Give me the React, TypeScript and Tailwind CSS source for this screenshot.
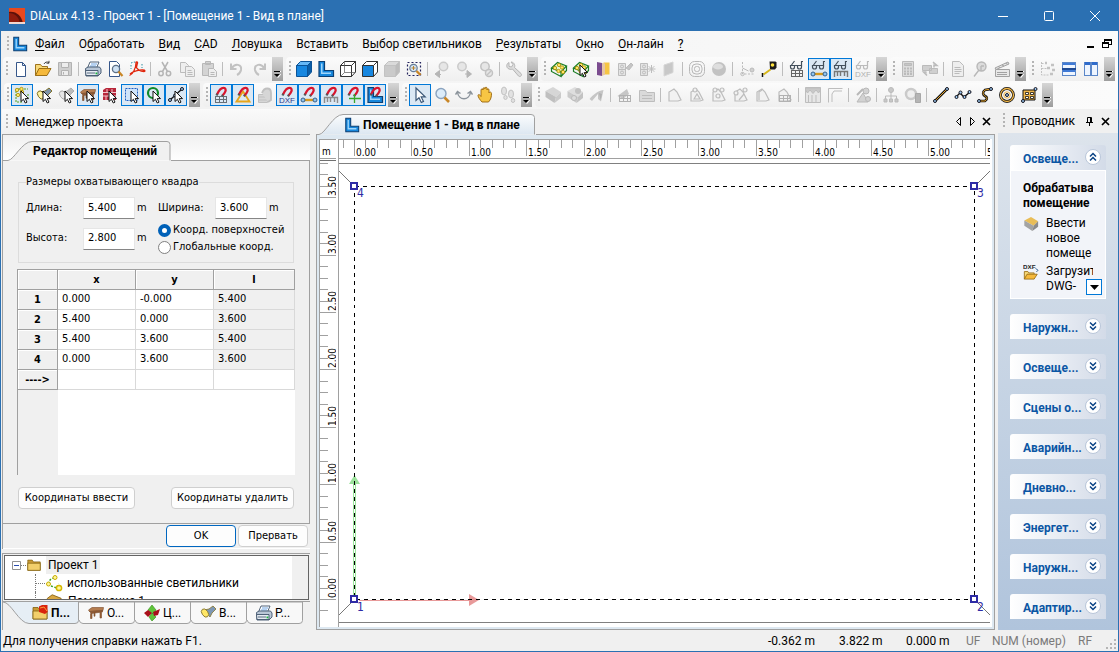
import type { ReactNode } from 'react'
import { clsx } from 'clsx'

const UI = "font-['Roboto','Noto_Sans',sans-serif]"
const TAHOMA = "font-['DejaVu_Sans_Condensed','DejaVu_Sans',sans-serif]"

/* ---------- Icon parts ---------- */

const pointer = (
  <path d="M8 5v10.5l2.4-2.2 1.9 3.7 1.7-.9-1.8-3.5h3.3z" fill="#fff" stroke="#111" strokeWidth="1" />
)

const magnet = (
  <g fill="none">
    <path d="M5 8.500C7 4 9.500 1 12.500 2C15 3.500 13 7 10.500 9.500" stroke="#d9152e" strokeWidth="2.200" />
    <path d="M4.500 9.500l.8-1.700M9.800 10.300l1.200-1.300" stroke="#555" strokeWidth="2.200" />
  </g>
)

const glasses = (color: string) => (
  <g fill="none" stroke={color} strokeWidth="1.2">
    <path d="M2.500 5.500h4v1.500q0 2-2 2t-2-2zM9.500 5.500h4v1.500q0 2-2 2t-2-2z" />
    <path d="M6.500 5.500h3M3.500 5l3-4M13.500 5.500V1.500h1.500" />
  </g>
)

const magnifier = (color: string, fill: string, handle: string) => (
  <g>
    <circle cx="8" cy="7.500" r="5" fill={fill} stroke={color} strokeWidth="1.400" />
    <path d="M11.500 11.500l4.500 4.500" stroke={handle} strokeWidth="2.600" />
  </g>
)

const gridPart = (color: string, y = 10) => (
  <g stroke={color} fill="none" strokeWidth="1" shapeRendering="crispEdges">
    <path d={`M3.500 ${y}.5h11M3.500 ${y + 3}.5h11M3.500 ${y + 6}.5h11M3.500 ${y}v7M7.500 ${y}v7M11.500 ${y}v7M14.500 ${y}v7`} />
  </g>
)

const dumbbell = (
  <g stroke="#35618e" strokeWidth="1">
    <path d="M4 14h10" stroke="#d99a1c" strokeWidth="2.400" />
    <circle cx="3" cy="14" r="2" fill="#8fc3ee" />
    <circle cx="15" cy="14" r="2" fill="#8fc3ee" />
  </g>
)

const rulerPart = (color: string) => (
  <path d="M2.500 17v-5.500h13v5.500M5.500 12v4M8.500 12v4M12.500 12v4" fill="none" stroke={color} strokeWidth="1.400" />
)

const polygon = (extra?: ReactNode) => (
  <g fill="#f2f2f2" stroke="#bdbdbd" strokeWidth="1.2">
    <path d="M3 15V6l5-3 3 3 4 8-3 1z" />
    {extra}
  </g>
)

const smallText = (text: string, color: string) => (
  <text x="9" y="17" textAnchor="middle" fontSize="8" fontFamily="Liberation Sans, sans-serif" fill={color}>
    {text}
  </text>
)

const blueL = (
  <g>
    <path d="M2 1.500h5.500v9h9v6H2z" fill="#1787dc" stroke="#0b3f73" strokeWidth="1.2" />
    <path d="M4 3.500h1.500v9H14v1.500H4z" fill="#9fd6fb" />
  </g>
)

const bulb = (x: number, y: number) => (
  <circle cx={x} cy={y} r="1.700" fill="#ffe566" stroke="#a68a00" strokeWidth=".8" />
)

const node = (x: number, y: number) => (
  <circle cx={x} cy={y} r="1.500" fill="#9cc9f3" stroke="#15151f" strokeWidth="1" />
)

const cube = (top: string, front: string, side: string, line = 'none') => (
  <g stroke={line} strokeWidth="1" strokeLinejoin="round">
    <path d="M1.500 5.500l4-4h11l-4 4z" fill={top} />
    <path d="M1.500 5.500h11v11h-11z" fill={front} />
    <path d="M12.500 5.500l4-4v10.500l-4 4.500z" fill={side} />
  </g>
)

const printer = (
  <g stroke="#40536b" strokeWidth=".9">
    <path d="M6 2h9l-2.500 6H3.500z" fill="#fff" />
    <path d="M7 4h6M6 6h6" stroke="#5f9be0" />
    <path d="M1.500 8.500L4 7h11.500l1.500 2v4l-3 3h-12z" fill="#b9c6d6" />
    <path d="M1.500 10.500h12.500v5h-12z" fill="#e6ecf3" />
    <path d="M3 13h8" stroke="#4b5d74" />
    <path d="M11.500 12.500h1.800v1.800h-1.800z" fill="#18b43c" stroke="none" />
  </g>
)

const tableIcon = (
  <g stroke="#7b4a28" strokeWidth=".6">
    <path d="M1.500 6l3.500-2.500h11.500L16 6.500l-13.500 1z" fill="#b57d50" />
    <path d="M2.500 7.500l13-1v1.500L4.500 9.500z" fill="#8f5a34" />
    <path d="M3.500 9.500h1.500v5H3.500zM7 9.200h1v3H7zM13 8.500h1.500v5.500H13z" fill="#9a6238" />
  </g>
)

const footlight = (a: string, b: string, c: string) => (
  <g stroke={c} strokeWidth=".9">
    <path d="M5 6l5-1 4-3 3 3-4 4-2 4z" fill={b} />
    <ellipse cx="6" cy="9" rx="3" ry="4.500" transform="rotate(-35 6 9)" fill={a} />
  </g>
)

const folder = (
  <g stroke="#80600f" strokeWidth=".8">
    <path d="M2 5V3.500h5l1.500 2H16V15H2z" fill="#c99a35" />
    <path d="M2 15V7h14v8z" fill="#f2cf6b" />
  </g>
)

const brick = (a: string, b: string, c: string) => (
  <g>
    <path d="M1.500 5L9 1l8 5-5 5z" fill={a} />
    <path d="M1.500 5v6l9 6 1.500-6z" fill={b} />
    <path d="M12 11l5-5v6l-6.500 5z" fill={c} />
  </g>
)

const lamps = (
  <g>
    <path d="M1.500 8l6-5.500L16.500 6l-5.500 6z" fill="#e9fbd2" stroke="#1c7d25" strokeWidth="1.200" />
    <path d="M1.500 8v3.500l9.500 5V12M11 16.500l5.500-6V6" fill="none" stroke="#1c7d25" strokeWidth="1.200" />
    {bulb(5, 8)}
    {bulb(9, 5)}
    {bulb(12, 7.5)}
    {bulb(8.5, 11)}
    {bulb(13, 12)}
  </g>
)

const icons: Record<string, ReactNode> = {
  new: <path d="M4.500 2.500h6l3 3v11h-9zM10.500 2.500v3h3" fill="#fff" stroke="#37578a" />,
  open: (
    <g stroke="#93650b" strokeWidth=".9">
      <path d="M1.500 15.500V4.500h5l1.500 2h5.500v2" fill="#f7d979" />
      <path d="M1.500 15.500l3.500-7h12l-4 7z" fill="#f5b93c" />
      <path d="M10 4c1-2 3-2.500 5-1.500M15 .8v2.400h-2.500" stroke="#333" fill="none" />
    </g>
  ),
  save: (
    <g fill="#cfcfcf" stroke="#b2b2b2">
      <path d="M2.500 2.500h13v13h-13z" />
      <path d="M5.500 2.500h7v5h-7zM5.500 10.500h7v5h-7z" fill="#ededed" />
      <path d="M7.500 12v2.500" />
    </g>
  ),
  print: printer,
  preview: (
    <g>
      <path d="M3.500 1.500h7l3 3v12h-10z" fill="#fff" stroke="#37578a" />
      <circle cx="10" cy="9" r="3.600" fill="#cfe2f4" stroke="#5c6f86" strokeWidth="1.300" />
      <path d="M12.500 11.500l4 4.500" stroke="#c98626" strokeWidth="2.200" />
    </g>
  ),
  pdf: (
    <g fill="none">
      <path d="M3 3l3-1 5 1M14 4v4M3 5v4" stroke="#2e8fa0" strokeDasharray="1.500 1.500" />
      <path d="M1.500 15.500c3-1 6.500-7 6.500-12.500q0-1.500 1-1c1 0 0 3-.5 5M7.500 6c1.500 3 5 5.500 8.500 5.500 1.500 0 1-1.500-.5-1.500-4-.5-11 1.500-13.500 4" stroke="#e0260d" strokeWidth="1.300" />
    </g>
  ),
  cut: (
    <g fill="none" stroke="#b5b5b5" strokeWidth="1.500">
      <path d="M6 2l5.500 9.500M12 2L6.500 11.500" />
      <circle cx="5" cy="13.500" r="2.200" />
      <circle cx="12.500" cy="13.500" r="2.200" />
    </g>
  ),
  copy: (
    <g fill="#eee" stroke="#bbb">
      <path d="M2.500 2.500h5l3 3v7h-8z" />
      <path d="M7.500 6.500h6l3 3v7h-9zM9.500 10.500h4M9.500 12.500h5M9.500 14.500h5" />
    </g>
  ),
  paste: (
    <g fill="#d4d4d4" stroke="#b8b8b8">
      <path d="M2.500 3.500h11v12h-11zM5.500 1.500h5v3h-5z" />
      <path d="M8.500 8.500h5l3 3v5h-8zM10.500 12.500h4M10.500 14.500h4" fill="#eee" />
    </g>
  ),
  undo: (
    <g fill="none" stroke="#c2c2c2" strokeWidth="2">
      <path d="M4 8c3-5 10-4 9 2-.5 2.500-2 4-4 5" />
      <path d="M3 3.500v5.500h5.500" />
    </g>
  ),
  redo: (
    <g fill="none" stroke="#c2c2c2" strokeWidth="2">
      <path d="M14 8c-3-5-10-4-9 2 .5 2.500 2 4 4 5" />
      <path d="M15 3.500v5.500H9.500" />
    </g>
  ),
  cube: cube('#65b8f7', '#1787e0', '#0a5ea8', '#0b5397'),
  blueL,
  wire: (
    <g>
      {cube('#fff', '#fff', '#fff', '#333')}
      <path d="M5.500 1.500v11h11M5.500 12.500l-4 4" fill="none" stroke="#555" strokeWidth=".7" />
    </g>
  ),
  wireBlue: cube('#fff', '#1787e0', '#fff', '#333'),
  cubeGrey: cube('#dadada', '#cacaca', '#bcbcbc', '#c2c2c2'),
  zoomArea: (
    <g>
      <path d="M2.500 2.500h13v13h-13z" fill="none" stroke="#23235c" strokeWidth="1.200" strokeDasharray="2 2" />
      <circle cx="8.500" cy="8" r="3.700" fill="#d5e6f6" stroke="#677d96" strokeWidth="1.200" />
      <path d="M6.500 8h4M8.500 6v4" stroke="#b9822c" />
      <path d="M11.500 11l4 4" stroke="#c98626" strokeWidth="2.400" />
    </g>
  ),
  zoomPrev: (
    <g>
      <circle cx="10.500" cy="6.500" r="4.200" fill="#e6e6e6" stroke="#cacaca" strokeWidth="1.500" />
      <path d="M8 14.500H4M6.500 10.500l-4.500 3.500 4.500 3.500z" fill="#b5b5b5" stroke="#b5b5b5" />
    </g>
  ),
  zoomNext: (
    <g>
      <circle cx="7" cy="6.500" r="4.200" fill="#e6e6e6" stroke="#cacaca" strokeWidth="1.500" />
      <path d="M10 14h3M12 10.500l4.500 3.500-4.500 3.500z" fill="#b5b5b5" stroke="#b5b5b5" />
    </g>
  ),
  zoomOff: (
    <g fill="#e6e6e6" stroke="#c2c2c2" strokeWidth="1.500">
      <circle cx="8" cy="6.500" r="4.200" />
      <circle cx="12" cy="13" r="3.500" />
      <path d="M10 15l4-4" />
    </g>
  ),
  wrench: (
    <path d="M4 2.500c-2.500 1-3.500 5 0 6.500 1.500.5 2.500.5 3.500 0l6 7c1.500 1.500 4-.5 2.500-2.500L9.500 7.500c1-3-1-5.500-3.500-5.500L8 4.500 6.500 7 4 6.500z" fill="#ddd" stroke="#b5b5b5" />
  ),
  lamps,
  lampsPick: <g>{lamps}{pointer}</g>,
  filter: (
    <g>
      <path d="M3 2l5 1v13l-5-1z" fill="#7b4c8f" />
      <path d="M9.500 2.500h6v12h-6z" fill="#f6c544" />
      <path d="M8 3l3 .5v11L8 16z" fill="#e7c6a4" />
    </g>
  ),
  colorOff: (
    <g fill="#e4e4e4" stroke="#bdbdbd">
      <path d="M2.500 3.500h7v12h-7zM2.500 9.500h7" />
      <circle cx="6" cy="6.500" r="1.500" />
      <circle cx="6" cy="12.500" r="1.500" />
      <path d="M10 8l5-5 2 2-4 5z" fill="#c5c5c5" />
    </g>
  ),
  sunOff: (
    <g fill="#e4e4e4" stroke="#bdbdbd">
      <path d="M2.500 3.500h7v12h-7zM2.500 9.500h7" />
      <circle cx="6" cy="6.500" r="1.500" />
      <circle cx="6" cy="12.500" r="1.500" />
      <path d="M13.500 5v8M9.500 9h8M10.700 6.200l5.600 5.600M16.300 6.200l-5.600 5.600" />
    </g>
  ),
  sheet: <path d="M4 5l9-3v10.500L4 16z" fill="#c8c8c8" stroke="#d6d6d6" />,
  rings: (
    <g fill="none" stroke="#b8b8b8">
      <rect x="1.500" y="1.500" width="15" height="15" rx="5" />
      <rect x="4" y="4" width="10" height="10" rx="4" />
      <rect x="6.500" y="6.500" width="5" height="5" rx="2" />
    </g>
  ),
  sphere: (
    <g>
      <circle cx="9" cy="9" r="7" fill="#c2c2c2" />
      <ellipse cx="8" cy="6.500" rx="5" ry="3" fill="#dedede" />
    </g>
  ),
  axes: (
    <g stroke="#bbb" fill="none">
      <path d="M4.500 2v12h11" strokeDasharray="2 1.500" />
      <circle cx="4.500" cy="14" r="1.700" />
      <circle cx="14" cy="10" r="2" fill="#d0d0d0" />
      <path d="M4.500 8l6 3" />
    </g>
  ),
  tape: (
    <g>
      <path d="M9.500 1.500h6l1 1v5l-1.500 2h-5z" fill="#1b1b1b" />
      <circle cx="12.500" cy="5" r="1.800" fill="#ffe23e" />
      <path d="M10.500 9.500l-7 5" stroke="#d8b81c" strokeWidth="2" />
      <path d="M2.500 13v4" stroke="#111" strokeWidth="1.500" />
    </g>
  ),
  glassGrid: <g>{glasses('#44505c')}{gridPart('#666')}</g>,
  glassBar: <g>{glasses('#44505c')}{dumbbell}</g>,
  glassRuler: <g>{glasses('#44505c')}{rulerPart('#777')}</g>,
  glassDxf: <g>{glasses('#bbb')}{smallText('DXF', '#b0b0b0')}</g>,
  calc: (
    <g fill="#ddd" stroke="#bbb">
      <path d="M3.500 1.500h11v15h-11z" />
      <path d="M5.500 3.500h7v2h-7z" fill="#c6c6c6" />
      <path d="M5 8.500h8M5 11.500h8M5 14h8" strokeDasharray="2 1" strokeWidth="1.800" />
    </g>
  ),
  swap: (
    <g fill="#cfcfcf" stroke="#bbb">
      <path d="M1.500 5.500h9v5h-9zM8.500 8.500h8v5h-8z" />
      <path d="M12 2l4 3.500h-3v2M6 15.500L2.500 12h3" strokeWidth="1.500" />
    </g>
  ),
  doc: <path d="M3.500 1.500h7l4 4v11h-11zM5.500 7.500h6M5.500 9.500h7M5.500 11.500h7M5.500 13.500h5" fill="#eee" stroke="#bbb" />,
  pin: (
    <g fill="#dcdcdc" stroke="#b8b8b8" strokeWidth="1.400">
      <circle cx="10.500" cy="6.500" r="4.500" />
      <path d="M8 10l-5 6.500M10 6h3M10 6v5" />
    </g>
  ),
  clapper: (
    <g stroke="#a2a2a2" fill="#e8e8e8">
      <path d="M2.500 9.500h14v7h-14zM4 12.500h10M4 14.500h10" />
      <path d="M2 8l13-6 1 2L3 9.500zM5 6.500l2 1M9 5l2 1M12.500 3.500l2 .5" />
    </g>
  ),
  tree: (
    <g stroke="#c2c2c2" fill="#d5d5d5">
      <path d="M3.500 2v13h7M3.500 8.500h5M3.500 3.500h3" fill="none" strokeDasharray="2 1" />
      <path d="M7 3h2M9 8h3M13 5h3M12 14h3M14 10h3" strokeWidth="2.500" />
    </g>
  ),
  splitH: (
    <g shapeRendering="crispEdges">
      <path d="M2.500 2.500h13v13h-13z" fill="#eef5ff" stroke="#5a86c8" />
      <path d="M3 3h12v2H3zM3 10h12v2H3z" fill="#3f7ad6" />
      <path d="M2 8.500h14" stroke="#1f4a94" strokeWidth="2" />
    </g>
  ),
  splitV: (
    <g shapeRendering="crispEdges">
      <path d="M2.500 2.500h13v13h-13z" fill="#eef5ff" stroke="#5a86c8" />
      <path d="M3 2h12v3H3z" fill="#2f6bcb" />
      <path d="M9 2v14" stroke="#5a86c8" strokeWidth="2" />
    </g>
  ),
  selLamps: (
    <g>
      <path d="M3 5v11h7M5 3h10M15 8v4" fill="none" stroke="#56a21c" strokeDasharray="2 1" />
      {bulb(4, 4)}
      {bulb(8.5, 3)}
      {bulb(5, 9)}
      {bulb(9, 6)}
      {pointer}
    </g>
  ),
  selSpot: <g>{footlight('#fff3a0', '#7e93a8', '#7a6a1d')}{pointer}</g>,
  selSpotGrey: <g>{footlight('#e6e6e6', '#bbb', '#a8a8a8')}{pointer}</g>,
  selTable: <g>{tableIcon}{pointer}</g>,
  selBrick: (
    <g>
      <path d="M2 4l3-2h10v12H2z" fill="#b7273a" />
      <path d="M2 6.500h13M2 10h13M6 3v3M11 3v3M8 7v3M5 10v4" stroke="#f2c4ca" />
      {pointer}
    </g>
  ),
  selArea: (
    <g>
      <path d="M2.500 2.500h12v12h-12z" fill="#cfe4fa" stroke="#1f61c4" strokeDasharray="2 1" />
      {pointer}
    </g>
  ),
  selRing: (
    <g>
      <circle cx="8" cy="7" r="5" fill="none" stroke="#0f8a2a" strokeWidth="2.200" />
      {pointer}
    </g>
  ),
  selLine: (
    <g>
      <path d="M3 14L15 3" stroke="#111" strokeWidth="1.300" />
      {node(3, 14)}
      {node(8, 9.5)}
      {node(15, 3)}
      {pointer}
    </g>
  ),
  magGrid: <g>{gridPart('#687078')}{magnet}</g>,
  magAngle: (
    <g>
      <path d="M2.500 15.500L9 5.500l6.500 10z" fill="none" stroke="#e7a51a" strokeWidth="1.800" />
      {magnet}
    </g>
  ),
  magOff: (
    <g fill="#d6d6d6" stroke="#c0c0c0">
      <path d="M2.500 8.500h9v8h-9zM2.500 11h9M2.500 14h9" />
      <path d="M6 7c2-6 9-6 9 0v7l-3 2" strokeWidth="1.800" />
    </g>
  ),
  magDxf: <g>{magnet}{smallText('DXF', '#2f3a8c')}</g>,
  magBar: <g>{magnet}{dumbbell}</g>,
  magRuler: <g>{rulerPart('#8c8c8c')}{magnet}</g>,
  magCross: <g>{magnet}<path d="M10.500 8v9M5 12.500h12" stroke="#36a82c" strokeWidth="1.300" /></g>,
  magL: <g>{blueL}{magnet}</g>,
  arrow: <path d="M5 2v12.500l3-2.700 2.300 4.700 2.200-1.100-2.300-4.500h4z" fill="#fff" stroke="#3c5878" strokeWidth="1.200" />,
  zoom: magnifier('#8aa3bf', '#dcecfa', '#c98626'),
  orbit: <path d="M2.500 6c1 9 12 9 13 0M.5 8.500l2-3 3 2M17.500 8.500l-2-3-3 2" fill="none" stroke="#8c949c" strokeWidth="1.500" />,
  hand: (
    <path d="M5 16c-2-2-4-5-4-6.500s2-1 3 1V4c0-1.500 2-1.500 2 0V2.800c0-1.500 2-1.500 2 0v-.5c0-1.500 2-1.500 2 0v1.500c0-1.300 2-1.300 2 0V7c0-1 2.500-1.500 2.500.5 0 3-.5 6-3 8.500z" fill="#f7c544" stroke="#96620b" strokeWidth=".9" />
  ),
  feet: (
    <g fill="#e2e2e2" stroke="#c2c2c2">
      <ellipse cx="5" cy="5" rx="2.500" ry="4" />
      <ellipse cx="6.500" cy="11.500" rx="1.700" ry="2" />
      <ellipse cx="12" cy="8" rx="2.500" ry="4" />
      <ellipse cx="14" cy="14.500" rx="1.700" ry="2" />
    </g>
  ),
  brickOff: brick('#d6d6d6', '#bfbfbf', '#cacaca'),
  objOff: (
    <g>
      {brick('#dedede', '#cacaca', '#c2c2c2')}
      <circle cx="12" cy="5" r="3" fill="#c2c2c2" />
      <circle cx="8" cy="12" r="2.500" fill="#ddd" stroke="#bbb" />
    </g>
  ),
  wedgeOff: (
    <g>
      <path d="M1.500 13C5 9 9 5 15.500 4L13 15.500 10 13V8l-6 7z" fill="#c6c6c6" />
      <path d="M11 7l3 1-1.500 6z" fill="#b2b2b2" />
    </g>
  ),
  gridOff: (
    <g>
      <path d="M1.500 10L11 3l2 5-6 5z" fill="#c6c6c6" />
      {gridPart('#b2b2b2', 9)}
    </g>
  ),
  folderOff: <path d="M1.500 4.500h6l1.500 2h7.500v9h-15zM4 9.500h10M4 12.500h10" fill="#dadada" stroke="#bdbdbd" />,
  poly1: polygon(),
  poly2: polygon(<><circle cx="7" cy="4" r="2" /><path d="M6 13l3-5 3 5z" /></>),
  poly3: polygon(<><circle cx="5" cy="4" r="2" /><circle cx="12" cy="4" r="2" /><circle cx="8" cy="10" r="2" /></>),
  poly4: polygon(<><circle cx="4" cy="7" r="2" /><circle cx="13" cy="4" r="2" /><path d="M7 14l5-6" /></>),
  poly5: polygon(<path d="M5 14V6l3-2" />),
  poly6: <g>{polygon()}{gridPart('#b2b2b2', 9)}</g>,
  curtain: (
    <g fill="#e6e6e6" stroke="#bdbdbd">
      <path d="M1.500 1.500h15v15h-15z" />
      <path d="M1.500 2h15v2l-2 3-2.500-3L9 7.500 6 4 3.500 7l-2-3z" fill="#c8c8c8" />
      <path d="M4.500 9v7M8 9v7M12 9v7" />
    </g>
  ),
  corner: <path d="M2.500 16.500v-14h14M6 16V8l2-3h8" fill="none" stroke="#bdbdbd" />,
  render: (
    <g fill="#d2d2d2" stroke="#b8b8b8">
      <path d="M3 16l6-9 5 9z" />
      <circle cx="12" cy="5" r="3" />
      <circle cx="14" cy="13" r="2.500" />
      <path d="M3 9l6-6" strokeWidth="2" />
    </g>
  ),
  org: (
    <g fill="#c8c8c8" stroke="#bbb">
      <circle cx="9" cy="4" r="2.500" />
      <path d="M9 6v4M3.500 13v-3h11v3M9 10v3" fill="none" />
      <path d="M2 13h3v3H2zM7.500 13h3v3h-3zM13 13h3v3h-3z" />
    </g>
  ),
  gearDoc: (
    <g stroke="#cacaca" fill="#efefef">
      <circle cx="7" cy="8" r="5" strokeWidth="2.500" />
      <path d="M11.500 7.500h5v9h-5z" fill="#b5b5b5" stroke="#a8a8a8" />
    </g>
  ),
  line: (
    <g>
      <path d="M3 15L15 3" stroke="#111" strokeWidth="2.600" />
      <path d="M3 15L15 3" stroke="#e9a52b" />
      {node(3, 15)}
      {node(15, 3)}
    </g>
  ),
  polyline: (
    <g>
      <path d="M2 11l4-4 4 4 6-5" stroke="#111" strokeWidth="1.400" fill="none" />
      {node(2.5, 11)}
      {node(6.5, 6.5)}
      {node(10.5, 11)}
      {node(15.5, 6)}
    </g>
  ),
  spline: (
    <g fill="none">
      <path d="M3 15h6c3-2 2-4 0-5s-3-4 0-6l6-1" stroke="#111" strokeWidth="2.600" />
      <path d="M3 15h6c3-2 2-4 0-5s-3-4 0-6l6-1" stroke="#e9a52b" />
      {node(3, 15)}
      {node(15, 3)}
    </g>
  ),
  circle: (
    <g fill="none">
      <circle cx="9" cy="9" r="6.500" stroke="#111" strokeWidth="2.800" />
      <circle cx="9" cy="9" r="6.500" stroke="#f0b649" strokeWidth="1.300" />
      <circle cx="9" cy="9" r="3.200" stroke="#f0b649" />
      {node(9, 9)}
    </g>
  ),
  hatch: (
    <g>
      <path d="M3 4h12v10H3z" fill="#f0b649" stroke="#111" />
      <path d="M5.500 6.500h3v2h-3zM10.500 6.500h3v2h-3zM5.500 10.500h3v2h-3zM10.500 10.500h3v2h-3z" fill="#fff" stroke="#111" strokeWidth=".8" />
      {node(3, 15)}
      {node(15.5, 3)}
    </g>
  ),
  folder,
  table: tableIcon,
  printer,
  project: (
    <g>
      {folder}
      <path d="M8 2.500l3-1.500h5.500v7L14 10 8 8z" fill="#d8230c" />
      <path d="M9 4l4-1 3 4" stroke="#ff9a3a" fill="none" />
    </g>
  ),
  colours: (
    <g>
      <path d="M9 1l4 5-3 4-5-4zM9 9l4 4-4 4-3-4z" fill="#5fc43a" stroke="#3f9a22" strokeWidth=".7" />
      <path d="M1 9l4-3 4 3-4 4zM10 8l7-3-2 6-4 1z" fill="#a80f1a" />
    </g>
  ),
  spot: footlight('#ffe766', '#7d97b5', '#8a7c3a'),
  room: brick('#e9bd57', '#a3a3a3', '#8a8a8a'),
  house: <path d="M1.500 6L7 2l10 4v8L8 16l-6.500-3z" fill="#d9a742" stroke="#8a6316" />,
  dxfOpen: (
    <g>
      <path d="M1.500 17V8.500h4l1 1.500h6v1.500" fill="#f7d979" stroke="#93650b" strokeWidth=".9" />
      <path d="M1.500 17l3-5.500h11.500l-3.500 5.500z" fill="#f5b93c" stroke="#93650b" strokeWidth=".9" />
      <text x="0" y="6" fontSize="7" fontFamily="Liberation Sans, sans-serif" fontWeight="bold" fill="#222">DXF</text>
      <path d="M14 5l3 2-2 2" fill="none" stroke="#2b5b8e" />
    </g>
  ),
  usedLamps: (
    <g>
      <path d="M4 10c0-5 3-6 6-6M12 13l2-3M6 12l6 2" fill="none" stroke="#39a326" strokeDasharray="2 1.500" strokeWidth="1.500" />
      <circle cx="3.500" cy="10" r="2" fill="#fff59a" stroke="#c9ae00" />
      <circle cx="10" cy="3.500" r="2" fill="#fff59a" stroke="#c9ae00" />
      <circle cx="14" cy="14" r="2.600" fill="#fff59a" stroke="#d6b800" strokeWidth="1.500" />
    </g>
  ),
}

function Icon({ name, className = 'size-[18px]' }: { name: string; className?: string }) {
  return (
    <svg viewBox="0 0 18 18" className={clsx('shrink-0', className)} aria-hidden="true">
      {icons[name]}
    </svg>
  )
}

/* ---------- Toolbars ---------- */

// '|' is a separator, a leading '*' marks a pressed button
const rowOne = [
  'new open save | print preview pdf | cut copy paste | undo redo',
  'cube blueL wire wireBlue cubeGrey zoomArea | zoomPrev zoomNext zoomOff | wrench',
  'lamps lampsPick filter colorOff sunOff sheet | rings sphere | axes tape | glassGrid *glassBar *glassRuler glassDxf',
  'calc swap | doc pin clapper',
  'tree splitH splitV',
]
const rowTwo = [
  '*selLamps selSpot selSpotGrey *selTable selBrick *selArea *selRing *selLine',
  '*magGrid *magAngle magOff *magDxf *magBar *magRuler *magCross *magL',
  '*arrow zoom orbit hand feet',
  'brickOff objOff wedgeOff | gridOff folderOff | poly1 poly2 poly3 poly4 poly5 poly6 | curtain corner | render | org gearDoc | line polyline spline circle hatch',
]

function Grip({ className = 'h-4' }: { className?: string }) {
  return (
    <span
      className={clsx(
        'w-[2px] shrink-0 bg-[repeating-linear-gradient(to_bottom,#b4b4b4_0_2px,transparent_2px_4px)]',
        className,
      )}
    />
  )
}

function ToolGroup({ items }: { items: string }) {
  return (
    <div role="toolbar" className="flex h-6 shrink-0 items-center rounded-l bg-linear-to-b from-[#fbfbfb] to-[#efefef]">
      <span className="flex w-[7px] justify-center">
        <Grip />
      </span>
      {items.split(' ').map((item, i) => {
        if (item === '|') {
          return <span key={i} className="mr-[3px] ml-[2px] h-[14px] w-px bg-[#bdbdbd]" />
        }
        const pressed = item.startsWith('*')
        const name = item.replace('*', '')
        return (
          <button
            key={i}
            type="button"
            aria-label={name}
            aria-pressed={pressed}
            className={clsx(
              'flex size-[22px] items-center justify-center border',
              pressed ? 'border-[#0078d7] bg-[#dbe8f4]' : 'border-transparent',
            )}
          >
            <Icon name={name} />
          </button>
        )
      })}
      <button
        type="button"
        aria-label="Параметры панели"
        className="ml-[2px] flex h-6 w-[11px] items-end justify-center bg-linear-to-b from-[#d6d6d6] to-[#9d9d9d] pb-[3px]"
      >
        <svg viewBox="0 0 7 7" className="size-[7px]" aria-hidden="true">
          <path d="M1 .5h6M1.500 3.500h5l-2.500 3z" fill="#fff" stroke="#fff" />
          <path d="M0 0h6v1H0zM0 3h6L3 6z" fill="#000" />
        </svg>
      </button>
    </div>
  )
}

const menus = [
  ['', 'Ф', 'айл'],
  ['О', 'б', 'работать'],
  ['', 'В', 'ид'],
  ['', 'C', 'AD'],
  ['', 'Л', 'овушка'],
  ['Вс', 'т', 'авить'],
  ['В', 'ы', 'бор светильников'],
  ['', 'Р', 'езультаты'],
  ['О', 'к', 'но'],
  ['', 'О', 'н-лайн'],
  ['', '?', ''],
]

function TitleBar() {
  return (
    <header className="flex h-[31px] shrink-0 items-center bg-[#2b70b2] text-white">
      <svg viewBox="0 0 16 16" className="ml-[9px] size-4" aria-hidden="true">
        <path d="M0 0h16v16H0z" fill="#e8491d" />
        <path d="M0 4C7 3 13 8 14 16H0z" fill="#5d1109" />
        <path d="M0 5c6 0 10 4 11 11H0z" fill="#8f1c0d" />
        <path d="M0 14h16v2H0z" fill="#f3d7cf" />
      </svg>
      <h1 className="ml-[5px] text-xs">DIALux 4.13 - Проект 1 - [Помещение 1 - Вид в плане]</h1>
      <div className="ml-auto flex h-full pr-px">
        <button type="button" aria-label="Свернуть" className="flex w-[46px] items-center justify-center">
          <svg viewBox="0 0 10 10" className="size-[10px]" stroke="#fff" aria-hidden="true"><path d="M0 5.500h10" /></svg>
        </button>
        <button type="button" aria-label="Развернуть" className="flex w-[46px] items-center justify-center">
          <svg viewBox="0 0 10 10" className="size-[10px]" stroke="#fff" fill="none" aria-hidden="true"><rect x=".5" y=".5" width="9" height="9" rx="1" /></svg>
        </button>
        <button type="button" aria-label="Закрыть" className="flex w-[46px] items-center justify-center">
          <svg viewBox="0 0 10 10" className="size-[10px]" stroke="#fff" aria-hidden="true"><path d="M0 0l10 10M10 0L0 10" /></svg>
        </button>
      </div>
    </header>
  )
}

function MenuBar() {
  return (
    <nav className="flex h-[26px] shrink-0 items-center pl-[6px]">
      <Grip />
      <Icon name="blueL" className="ml-[3px] size-4" />
      <div className="ml-[7px] flex gap-[14px] text-xs">
        {menus.map(([before, key, after]) => (
          <button key={key + after} type="button" className="whitespace-nowrap">
            {before}
            <u className="underline-offset-2">{key}</u>
            {after}
          </button>
        ))}
      </div>
      <div className="ml-auto flex gap-[7px] pr-[6px]">
        <button type="button" aria-label="Свернуть окно">
          <svg viewBox="0 0 9 10" className="h-[10px] w-[9px]" aria-hidden="true"><path d="M1 7h7v2H1z" /></svg>
        </button>
        <button type="button" aria-label="Восстановить окно">
          <svg viewBox="0 0 10 10" className="size-[10px]" fill="none" stroke="#000" shapeRendering="crispEdges" aria-hidden="true">
            <path d="M2.500 3V.5h7v5H7M2 1.500h8M.5 3.500h6v5h-6zM0 4.500h7" />
          </svg>
        </button>
      </div>
    </nav>
  )
}

/* ---------- Left panel ---------- */

const rows = [
  ['0.000', '-0.000', '5.400'],
  ['5.400', '0.000', '3.600'],
  ['5.400', '3.600', '5.400'],
  ['0.000', '3.600', '3.600'],
]

function SizeField({ id, label, value }: { id: string; label: string; value: string }) {
  return (
    <div className="flex items-center">
      <label htmlFor={id} className="w-[57px]">{label}</label>
      <input
        id={id}
        defaultValue={value}
        className="h-[22px] w-[52px] border border-[#e6e6e6] border-b-[#868686] bg-white px-1 pb-[2px] outline-none"
      />
      <span className="ml-[2px]">m</span>
    </div>
  )
}

function CoordTable() {
  const head = 'border-b border-r border-[#a0a0a0] bg-[#f0f0f0] pt-px shadow-[inset_1px_1px_0_#fff]'
  return (
    <div className="mx-[14px] mt-[6px] h-[206px] border-l border-t border-[#a0a0a0] bg-[linear-gradient(to_right,#f0f0f0_40px,#fff_40px)]">
      <table className="w-full table-fixed border-separate border-spacing-0">
        <colgroup>
          <col className="w-10" />
          <col className="w-[78px]" />
          <col className="w-[78px]" />
          <col />
        </colgroup>
        <thead>
          <tr className="h-5">
            <th className={head} />
            <th className={head}>x</th>
            <th className={head}>y</th>
            <th className={head}>l</th>
          </tr>
        </thead>
        <tbody>
          {rows.map((cells, i) => (
            <tr key={i} className="h-5">
              <th className={head}>{i + 1}</th>
              {cells.map((cell, j) => (
                <td
                  key={j}
                  className={clsx('border-b border-r border-[#d9d9d9] pb-[2px] pl-1 leading-4', j === 2 && 'bg-[#f0f0f0]')}
                >
                  {cell}
                </td>
              ))}
            </tr>
          ))}
          <tr className="h-5">
            <th className={head}>----&gt;</th>
            <td className="border-b border-r border-[#d9d9d9]" />
            <td className="border-b border-r border-[#d9d9d9]" />
            <td className="border-b border-r border-[#d9d9d9]" />
          </tr>
        </tbody>
      </table>
    </div>
  )
}

function RoomEditor() {
  const btn = 'rounded border bg-[#fdfdfd] h-[22px] whitespace-nowrap'
  const radio =
    'size-[13px] appearance-none rounded-full border border-[#808080] bg-white checked:border-4 checked:border-[#0061b8]'
  return (
    <section className="border-l border-t border-[#a0a0a0]">
      <div className="flex h-[26px] items-end bg-linear-to-b from-[#f0f0f0] to-white">
        <span className="h-px w-[5px] bg-[#a0a0a0]" />
        <div className="relative h-5 w-[163px]">
          <svg viewBox="0 0 163 20" preserveAspectRatio="none" className="absolute inset-0 size-full" aria-hidden="true">
            <path d="M0 19.500C6 19 14 .5 24 .5h135q3 0 3 3v16" fill="#f0f0f0" stroke="#a0a0a0" />
          </svg>
          <h2 className="relative pl-[25px] text-xs leading-5 font-bold whitespace-nowrap">Редактор помещений</h2>
        </div>
        <span className="h-px flex-1 bg-[#a0a0a0]" />
      </div>
      <div className={clsx('border-b border-r border-[#a0a0a0] pt-[13px] pb-[14px] text-[11px]', TAHOMA)}>
        <fieldset className="mx-[15px] border border-[#dcdcdc] px-[7px] pb-[7px]">
          <legend className="leading-4">Размеры охватывающего квадра</legend>
          <div className="grid grid-cols-[132px_1fr] items-center gap-y-[3px] pt-[7px]">
            <SizeField id="length" label="Длина:" value="5.400" />
            <SizeField id="width" label="Ширина:" value="3.600" />
            <SizeField id="height" label="Высота:" value="2.800" />
            <div className="flex flex-col gap-px leading-4 whitespace-nowrap">
              <label className="flex items-center gap-[2px]">
                <input type="radio" name="coords" defaultChecked className={radio} />
                Коорд. поверхностей
              </label>
              <label className="flex items-center gap-[2px]">
                <input type="radio" name="coords" className={radio} />
                Глобальные коорд.
              </label>
            </div>
          </div>
        </fieldset>
        <CoordTable />
        <div className="mx-[15px] mt-3 flex justify-between">
          <button type="button" className={clsx(btn, 'w-[117px] border-[#cfcfcf]')}>Координаты ввести</button>
          <button type="button" className={clsx(btn, 'w-[123px] border-[#cfcfcf]')}>Координаты удалить</button>
        </div>
      </div>
      <div className={clsx('flex justify-end gap-[2px] border-b border-white pt-px pr-[2px] pb-px text-[11px]', TAHOMA)}>
        <button type="button" className={clsx(btn, 'w-[70px] border-[#0067c0]')}>OK</button>
        <button type="button" className={clsx(btn, 'w-[70px] border-[#cfcfcf]')}>Прервать</button>
      </div>
    </section>
  )
}

const panelTabs = [
  ['project', 'П...'],
  ['table', 'О...'],
  ['colours', 'Ц...'],
  ['spot', 'В...'],
  ['printer', 'Р...'],
]

function ProjectTree() {
  return (
    <section className="mt-1 flex min-h-0 flex-1 flex-col border-l border-t border-[#a0a0a0]">
      <div className="mx-px mt-px flex h-[45px] shrink-0 border border-[#646464] bg-white text-xs">
        <ul className="flex-1 overflow-hidden whitespace-nowrap">
          <li className="flex h-[18px] items-center pl-[7px]">
            <svg viewBox="0 0 14 9" className="h-[9px] w-[14px]" aria-hidden="true">
              <path d="M.5.5h8v8h-8z" fill="#fff" stroke="#919191" />
              <path d="M2 4.500h5" stroke="#2a4db0" />
              <path d="M9 4.500h5" stroke="#777" strokeDasharray="1 1" />
            </svg>
            <Icon name="folder" className="size-4" />
            <span className="ml-1 bg-[#efefef] px-[2px] leading-[18px]">Проект 1</span>
          </li>
          <li className="ml-[30px] flex h-[18px] items-center border-l border-dotted border-[#777]">
            <span className="w-[9px] border-t border-dotted border-[#777]" />
            <Icon name="usedLamps" />
            <span className="ml-1">использованные светильники</span>
          </li>
          <li className="ml-[30px] flex h-[18px] items-center border-l border-dotted border-[#777]">
            <Icon name="house" className="ml-[10px] size-4" />
            <span className="ml-[6px]">Помещение 1</span>
          </li>
        </ul>
        <span className="w-4 bg-[#f0f0f0]" />
      </div>
      <div role="tablist" className="mt-px flex h-[23px] border-t border-[#a0a0a0] text-xs">
        {panelTabs.map(([icon, text], i) => (
          <button
            key={icon}
            role="tab"
            type="button"
            aria-selected={i === 0}
            className={clsx('relative h-[22px]', i === 0 ? 'w-[76px] font-bold' : 'w-[56px]')}
          >
            <svg
              viewBox={i === 0 ? '0 0 76 22' : '0 0 56 22'}
              preserveAspectRatio="none"
              className="absolute inset-0 size-full"
              aria-hidden="true"
            >
              {i === 0 ? (
                <path d="M0 0C8 0 16 21.500 26 21.500h46q3.500 0 3.500-3V0" fill="#e6eef5" stroke="#a0a0a0" />
              ) : (
                <path d="M0 18q1 3.500 4 3.500h48q3.500 0 3.500-3V0H0" fill="#f8f8f8" stroke="#a0a0a0" />
              )}
            </svg>
            <span className={clsx('relative flex items-center gap-[2px]', i === 0 ? 'pl-7' : 'pl-2')}>
              <Icon name={icon} />
              {text}
            </span>
          </button>
        ))}
      </div>
    </section>
  )
}

/* ---------- Plan view ---------- */

// canvas scale in pixels per metre
const SCALE = 115
const ticks = Array.from({ length: 60 }, (_, i) => i - 1)
const pos = (i: number) => Math.round((i * SCALE) / 10 - i * 0.02)

function PlanView() {
  return (
    <main className="flex min-w-0 flex-1 flex-col">
      <div className="flex h-[26px] shrink-0 items-end">
        <span className="h-px w-[3px] bg-[#a0a0a0]" />
        <div className="relative h-[21px] w-[217px]">
          <svg viewBox="0 0 217 21" preserveAspectRatio="none" className="absolute inset-0 size-full" aria-hidden="true">
            <defs>
              <linearGradient id="tab" x2="0" y2="1">
                <stop offset="0" stopColor="#fbfcfd" />
                <stop offset="1" stopColor="#dce7f1" />
              </linearGradient>
            </defs>
            <path d="M0 20.500C6 20 14 .5 24 .5h188q3.500 0 3.500 3v17" fill="url(#tab)" stroke="#a0a0a0" />
          </svg>
          <h2 className="relative flex h-[21px] items-center gap-[3px] pl-[25px] text-xs font-bold whitespace-nowrap">
            <Icon name="blueL" className="size-4" />
            Помещение 1 - Вид в плане
          </h2>
        </div>
        <div className="flex h-full flex-1 items-center justify-end gap-[5px] border-b border-[#a0a0a0] pr-1">
          <button type="button" aria-label="Назад">
            <svg viewBox="0 0 9 9" className="size-[9px]" fill="none" stroke="#000" aria-hidden="true"><path d="M6.500.5v8l-4-4z" /></svg>
          </button>
          <button type="button" aria-label="Вперёд">
            <svg viewBox="0 0 9 9" className="size-[9px]" fill="none" stroke="#000" aria-hidden="true"><path d="M2.500.5v8l4-4z" /></svg>
          </button>
          <button type="button" aria-label="Закрыть вид">
            <svg viewBox="0 0 9 9" className="size-[9px]" stroke="#000" strokeWidth="1.700" aria-hidden="true"><path d="M1 1l7 7M8 1L1 8" /></svg>
          </button>
        </div>
      </div>
      <div className="flex min-h-0 flex-1 border-x border-b border-[#a0a0a0] bg-[#dde8f1] px-[2px] pt-1 pb-[2px]">
        <div className={clsx('grid min-h-0 min-w-0 flex-1 grid-cols-[19px_1fr] grid-rows-[19px_1fr] bg-white pr-[2px] text-[10px]', TAHOMA)}>
          <span className="mr-[2px] flex items-end justify-start border-l border-t border-[#a0a0a0] pl-[2px] leading-3">m</span>
          <svg className="size-full overflow-hidden border-l border-t border-[#a0a0a0]" shapeRendering="crispEdges" aria-hidden="true">
            {ticks.map((i) => (
              <g key={i}>
                <path d={`M${pos(i) + 15}.5 0v${i % 5 === 0 ? 16 : 8}`} stroke="#a0a0a0" />
                {i >= 0 && i % 5 === 0 && <text x={pos(i) + 17} y="16">{(i / 10).toFixed(2)}</text>}
              </g>
            ))}
          </svg>
          <div className="mr-[2px] flex min-h-0 overflow-hidden border-l border-t border-[#a0a0a0]">
            <svg className="h-full w-4" shapeRendering="crispEdges" aria-hidden="true">
              <path d="M0 1.500h16" stroke="#707070" />
              {ticks.map((i) => (
                <g key={i}>
                  <path d={`M0 ${440 - pos(i)}.5h${i % 5 === 0 ? 16 : 8}`} stroke={i <= 38 ? '#a0a0a0' : 'none'} />
                  {i >= 0 && i <= 35 && i % 5 === 0 && (
                    <text transform={`translate(16 ${439 - pos(i)}) rotate(-90)`}>{(i / 10).toFixed(2)}</text>
                  )}
                </g>
              ))}
            </svg>
          </div>
          <div className="min-h-0 overflow-hidden border-l border-t border-[#a0a0a0]">
            <svg className="size-full" fill="none" aria-label="План помещения 1">
              <g shapeRendering="crispEdges">
                <path d="M0 4.500h652M0 463.500h652" stroke="#808080" />
                <path d="M14.500 438V325M16.500 438V325" stroke="#9be39b" />
                <path d="M20 441.500h110" stroke="#e89a9a" />
              </g>
              <path d="M0 12l12 12M0 456l13-13M638 25l14-14M638 443l14 14" stroke="#777" />
              <path d="M15.500 316l5.500 9H10z" fill="#9be39b" />
              <path d="M130 435l10 6-10 6z" fill="#e89a9a" />
              <path d="M15.500 27.500h620v413h-620z" stroke="#000" strokeDasharray="4 4" shapeRendering="crispEdges" />
              <g fill="#fff" stroke="#2e2ba5" strokeWidth="2" shapeRendering="crispEdges">
                <path d="M12 24h6v6h-6zM632 24h6v6h-6zM12 437h6v6h-6zM632 437h6v6h-6z" />
              </g>
              <g fill="#2e2ba5" fontSize="12">
                <text x="18" y="38">4</text>
                <text x="638" y="38">3</text>
                <text x="18" y="452">1</text>
                <text x="638" y="452">2</text>
              </g>
            </svg>
          </div>
        </div>
      </div>
    </main>
  )
}

/* ---------- Guide ---------- */

const guideItems = ['Наружн...', 'Освеще...', 'Сцены о...', 'Аварийн...', 'Дневно...', 'Энергет...', 'Наружн...', 'Адаптир...']

function GuideHeader({ title, open = false }: { title: string; open?: boolean }) {
  return (
    <button
      type="button"
      aria-expanded={open}
      className="flex h-[25px] w-full items-center justify-between rounded-t-[3px] bg-linear-to-r from-white to-[#d3dbe8] pr-[5px] pl-[13px] text-xs font-bold text-[#0b56a4]"
    >
      <span className="pt-[3px]">{title}</span>
      <svg viewBox="0 0 16 16" className="mb-[2px] size-4 shrink-0" fill="none" aria-hidden="true">
        <circle cx="8" cy="8" r="7.500" fill="#fff" stroke="#b9c6d9" />
        <path d={open ? 'M5 7.500l3-3 3 3M5 11.500l3-3 3 3' : 'M5 4.500l3 3 3-3M5 8.500l3 3 3-3'} stroke="#0b4385" strokeWidth="1.500" />
      </svg>
    </button>
  )
}

function Guide() {
  return (
    <aside className="ml-[3px] flex w-[120px] shrink-0 flex-col">
      <div className="flex h-6 shrink-0 items-center pl-[5px]">
        <Grip />
        <h2 className="ml-[7px] text-xs">Проводник</h2>
        <div className="ml-auto flex gap-[7px] pr-2">
          <button type="button" aria-label="Закрепить">
            <svg viewBox="0 0 9 9" className="size-[9px]" fill="none" stroke="#000" aria-hidden="true"><path d="M2.500 5V.5h4V5M5.500 1v4M1 5.500h7M4.500 6v3" /></svg>
          </button>
          <button type="button" aria-label="Закрыть">
            <svg viewBox="0 0 9 9" className="size-[9px]" stroke="#000" strokeWidth="1.700" aria-hidden="true"><path d="M1 1l7 7M8 1L1 8" /></svg>
          </button>
        </div>
      </div>
      <div className="flex min-h-0 flex-1 flex-col gap-[15px] bg-linear-to-b from-[#dde4ec] to-[#b0c4dc] pt-3 pr-3 pl-3 text-xs">
        <section>
          <GuideHeader title="Освеще..." open />
          <div className="relative h-[129px] overflow-hidden border border-white bg-[#f2f4f9] px-3 pt-[10px] leading-[15px] whitespace-nowrap">
            <p className="overflow-hidden font-bold">Обрабатыва<br />помещение</p>
            <a href="#room" className="mt-[5px] flex gap-[7px] overflow-hidden">
              <Icon name="room" className="size-4" />
              <span>Ввести<br />новое<br />помеще</span>
            </a>
            <a href="#dwg" className="mt-[3px] flex gap-[7px] overflow-hidden">
              <Icon name="dxfOpen" className="size-4" />
              <span>Загрузит<br />DWG-</span>
            </a>
            <button
              type="button"
              aria-label="Прокрутить вниз"
              className="absolute right-[3px] bottom-[3px] flex size-4 items-center justify-center border border-[#0078d7] bg-white"
            >
              <svg viewBox="0 0 9 5" className="h-[5px] w-[9px]" aria-hidden="true"><path d="M0 0h9L4.500 5z" /></svg>
            </button>
          </div>
        </section>
        {guideItems.map((title, i) => (
          <GuideHeader key={i} title={title} />
        ))}
      </div>
    </aside>
  )
}

function StatusBar() {
  return (
    <footer className="flex h-[21px] shrink-0 items-center pt-px pl-[2px] text-xs">
      <p className="flex-1">Для получения справки нажать F1.</p>
      <span className="w-[71px]">-0.362 m</span>
      <span className="w-[67px]">3.822 m</span>
      <span className="w-[60px]">0.000 m</span>
      <span className="w-[26px] text-[#7a7a7a]">UF</span>
      <span className="w-[86px] text-[#7a7a7a]">NUM (номер)</span>
      <span className="w-[28px] text-[#7a7a7a]">RF</span>
      <svg viewBox="0 0 12 12" className="size-3 self-end" fill="#b5b5b5" aria-hidden="true">
        <path d="M8 0h2v2H8zM8 4h2v2H8zM8 8h2v2H8zM4 4h2v2H4zM4 8h2v2H4zM0 8h2v2H0z" />
      </svg>
    </footer>
  )
}

export default function App() {
  return (
    <div className={clsx('flex h-screen flex-col overflow-hidden bg-[#f0f0f0] text-black', UI)}>
      <TitleBar />
      <div className="flex min-h-0 flex-1 flex-col border-x border-b border-[#2b70b2]">
        <div className="shrink-0 bg-linear-to-r from-[#f0f0f0] to-[#fbfbfb]">
          <MenuBar />
          <div className="flex h-6 items-center gap-[3px] overflow-hidden pl-[2px]">
            {rowOne.map((items) => <ToolGroup key={items} items={items} />)}
          </div>
          <div className="flex h-7 items-center gap-[3px] overflow-hidden pl-[3px]">
            {rowTwo.map((items) => <ToolGroup key={items} items={items} />)}
          </div>
        </div>
        <div className="flex min-h-0 flex-1">
          <aside className="mr-[6px] flex w-[309px] shrink-0 flex-col pl-px">
            <div className="flex h-[25px] shrink-0 items-center bg-linear-to-b from-[#fafafa] to-[#f0f0f0] pl-1">
              <Grip />
              <h2 className="ml-[7px] text-xs">Менеджер проекта</h2>
            </div>
            <RoomEditor />
            <ProjectTree />
          </aside>
          <PlanView />
          <Guide />
        </div>
        <StatusBar />
      </div>
    </div>
  )
}
